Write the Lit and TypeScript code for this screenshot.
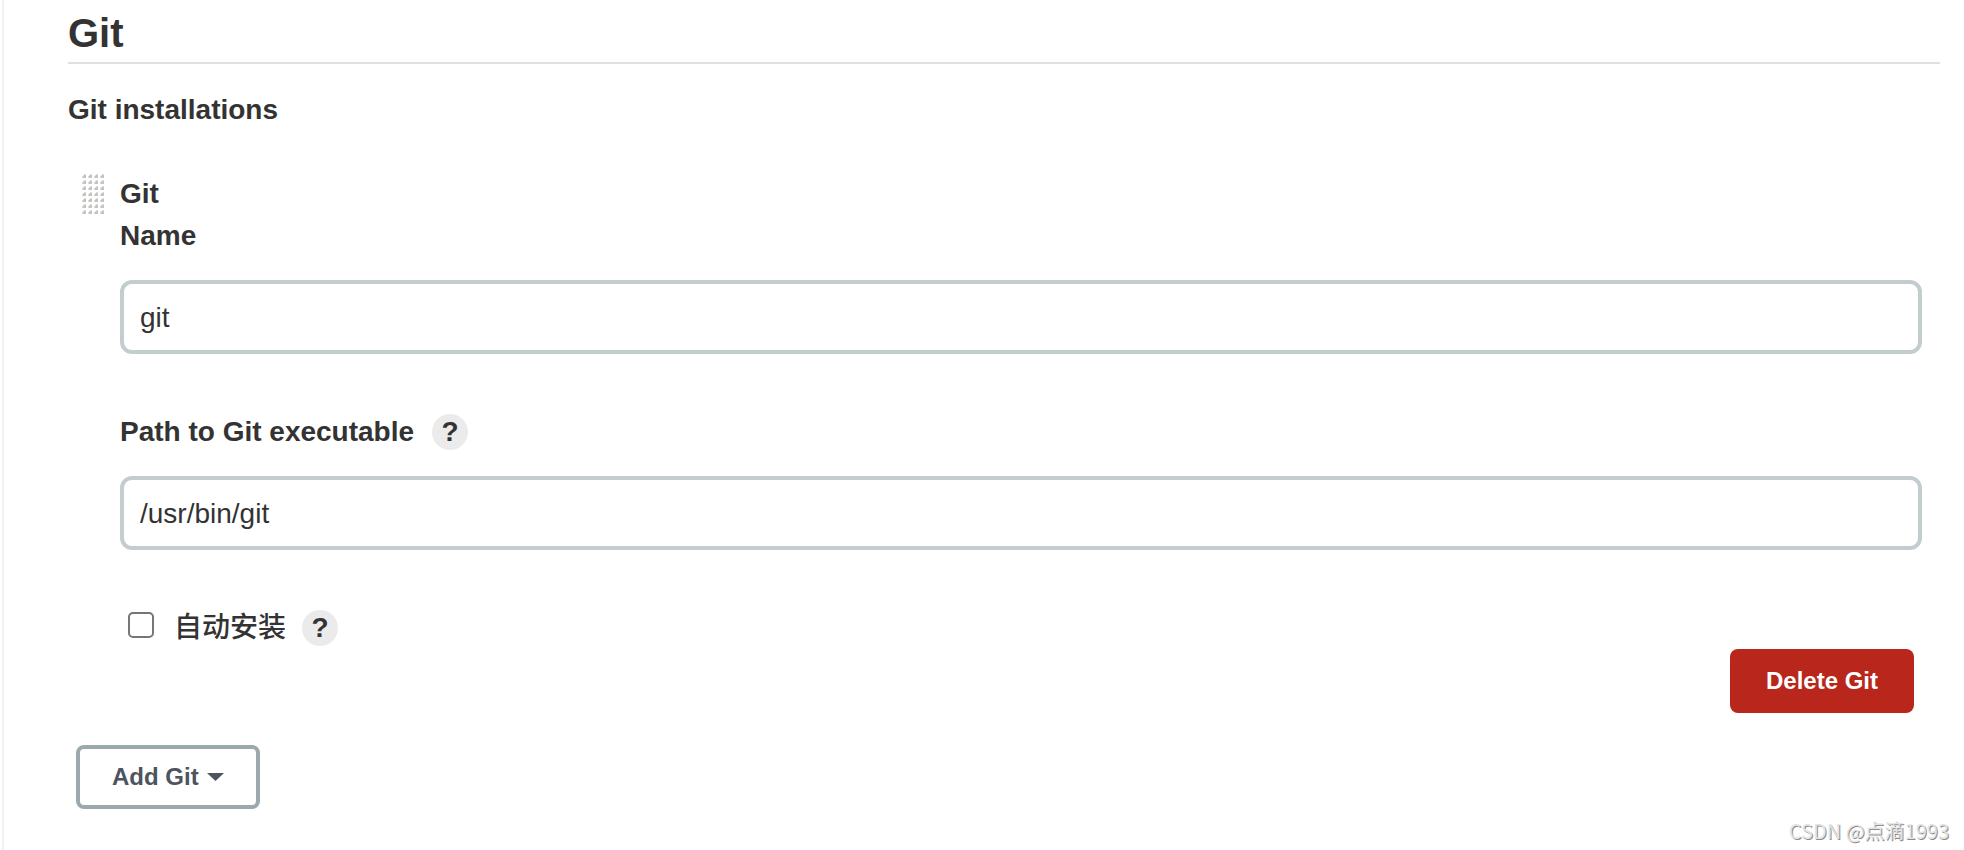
import { LitElement, html, css } from "lit";
import { customElement } from "lit/decorators.js";

@customElement("app-root")
export class AppRoot extends LitElement {
  static styles = css`
    :host {
      display: block;
      font-family: "Liberation Sans", "Noto Sans CJK SC", sans-serif;
      font-size: 28px;
      line-height: 42px;
      color: #333;
    }
    * {
      box-sizing: border-box;
    }
    .page {
      position: relative;
      min-height: 100vh;
      margin-left: 2px;
      padding: 4px 24px 40px 64px;
      border-left: 2px solid #f1f1f1;
      background: #fff;
    }
    h2,
    h3,
    h4 {
      margin: 0;
      font-weight: 700;
    }
    h2 {
      padding: 5px 0;
      border-bottom: 2px solid #e0e0e0;
      font-size: 40px;
      line-height: 48px;
    }
    h3 {
      margin-top: 25px;
      font-size: 28px;
    }
    h4 {
      font-size: 28px;
    }
    .item {
      display: grid;
      grid-template-columns: 22px 1fr;
      column-gap: 16px;
      margin-top: 42px;
      padding: 0 18px 0 14px;
    }
    .handle {
      width: 22px;
      height: 42px;
      cursor: move;
    }
    .fields {
      display: flex;
      flex-direction: column;
    }
    .label {
      display: flex;
      align-items: center;
      gap: 18px;
      font-weight: 700;
    }
    .field {
      display: flex;
      flex-direction: column;
      gap: 23px;
      margin-bottom: 57px;
    }
    .text {
      width: 100%;
      height: 74px;
      padding: 2px 16px 0;
      border: 4px solid #c3cccf;
      border-radius: 12px;
      background: #fff;
      color: #333;
      font: inherit;
    }
    .help {
      width: 36px;
      height: 36px;
      padding: 0;
      border: 0;
      border-radius: 50%;
      background: #ebebeb;
      color: #333;
      font: inherit;
      font-weight: 700;
      line-height: 36px;
      text-align: center;
    }
    .check {
      display: flex;
      align-items: center;
      gap: 16px;
      padding-left: 8px;
    }
    .check label {
      font-weight: 500;
    }
    .box {
      appearance: none;
      width: 26px;
      height: 26px;
      margin: 0 4px 6px 0;
      border: 2px solid #767676;
      border-radius: 5px;
      background: #fff;
    }
    .btn {
      height: 64px;
      padding: 0 36px;
      border: 0;
      border-radius: 8px;
      font: inherit;
      font-size: 24px;
      font-weight: 700;
    }
    .danger {
      align-self: flex-end;
      margin-right: 8px;
      background: #b9261b;
      color: #fff;
    }
    .add {
      display: flex;
      align-items: center;
      gap: 8px;
      margin: 32px 0 0 8px;
      padding: 0 32px;
      border: 4px solid #9ba8ae;
      background: #fff;
      color: #4d545d;
    }
    .mark {
      position: absolute;
      right: 15px;
      bottom: 5px;
      font-family: "Noto Sans CJK SC", sans-serif;
      font-size: 20px;
      font-weight: 400;
      line-height: 28px;
      color: #e4e4e4;
      text-shadow: 1px 1px 0 #8c8c8c;
    }
  `;

  render() {
    return html`
      <main class="page">
        <h2>Git</h2>
        <h3>Git installations</h3>
        <section class="item">
          <svg class="handle" viewBox="0 0 22 42" aria-hidden="true">
            <defs>
              <pattern id="grip" width="6" height="6" patternUnits="userSpaceOnUse">
                <path d="M0 5V3h1V2h1V1h2v4z" fill="#dddcda" />
                <path d="M1 3h1V2h2v3H1z" fill="#c6c4c1" />
              </pattern>
            </defs>
            <rect width="22" height="42" fill="url(#grip)" />
          </svg>
          <div class="fields">
            <h4>Git</h4>
            <div class="field">
              <label class="label" for="name">Name</label>
              <input class="text" id="name" type="text" .value=${"git"} />
            </div>
            <div class="field">
              <div class="label">
                <label for="path">Path to Git executable</label>
                <button class="help" type="button">?</button>
              </div>
              <input class="text" id="path" type="text" .value=${"/usr/bin/git"} />
            </div>
            <div class="check">
              <input class="box" id="auto" type="checkbox" />
              <label for="auto">自动安装</label>
              <button class="help" type="button">?</button>
            </div>
            <button class="btn danger" type="button">Delete Git</button>
          </div>
        </section>
        <button class="btn add" type="button">
          Add Git
          <svg width="17" height="8" viewBox="0 0 17 8" aria-hidden="true">
            <path d="M0 0h17L8.500 8z" fill="#4d545d" />
          </svg>
        </button>
        <div class="mark">CSDN @点滴1993</div>
      </main>
    `;
  }
}
